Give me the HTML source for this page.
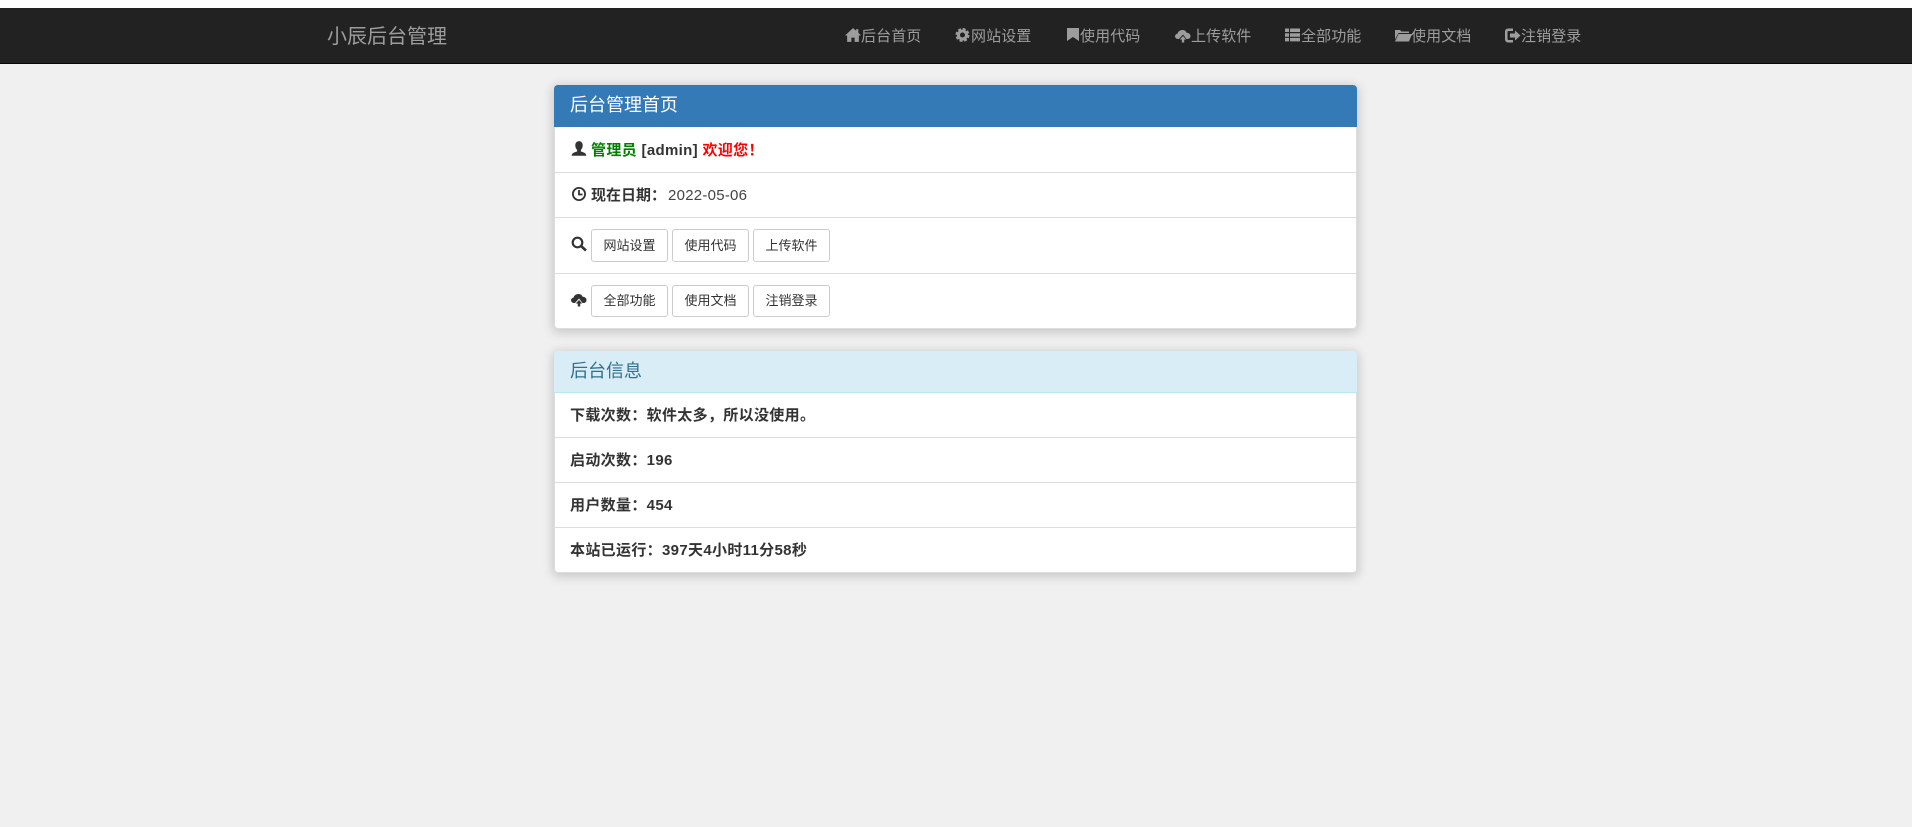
<!DOCTYPE html>
<html lang="zh-CN">
<head>
<meta charset="utf-8">
<title>小辰后台管理</title>
<style>
*{box-sizing:border-box}
html,body{margin:0;padding:0;width:1912px;height:827px;overflow:hidden;background:#f0f0f0;font-family:"Liberation Sans","Noto Sans CJK SC",sans-serif;color:#333}
.abs,.t,svg{position:absolute}
.t{white-space:nowrap;line-height:20px;font-size:15px}
#top{left:0;top:0;width:1912px;height:8px;background:#fff}
#nav{left:0;top:8px;width:1912px;height:56px;background:#222;border-bottom:1px solid #080808}
.n{color:#9d9d9d;top:27px;letter-spacing:.1px}
.brand{color:#9d9d9d;font-size:20px;left:327px;top:27px}
.panel{background:#fff;left:554px;width:803px;border:1px solid #ddd;border-radius:4px;box-shadow:0 2px 10px 2px rgba(0,0,0,.16)}
.h{left:554px;width:803px;height:42px;border-radius:4px 4px 0 0}
.line{left:555px;width:801px;height:1px;background:#ddd}
.ht{font-size:18px;left:570px}
.b{font-weight:bold;color:#333;letter-spacing:.33px}
.btn{height:33px;width:77px;border:1px solid #ccc;border-radius:3px;background:#fff;font-size:13px;line-height:31px;text-align:center;color:#333}
</style>
</head>
<body>
<div class="abs" id="top"></div>
<div class="abs" id="nav"></div>
<div class="t brand">小辰后台管理</div>

<svg style="left:845px;top:27px" width="16" height="16" viewBox="0 0 15 15" fill="#9d9d9d"><path d="M7.5 1 0 8h2v6h4V10h3v4h4V8h2L12.5 5.4V2h-2v1.5z"/></svg>
<div class="t n" style="left:861px">后台首页</div>
<svg style="left:955px;top:28px" width="15" height="15" viewBox="0 0 15 15"><circle cx="7.5" cy="7" r="4" fill="none" stroke="#9d9d9d" stroke-width="3"/><circle cx="7.5" cy="7" r="6" fill="none" stroke="#9d9d9d" stroke-width="2" stroke-dasharray="3 1.71"/></svg>
<div class="t n" style="left:971px">网站设置</div>
<svg style="left:1066px;top:27px" width="14" height="15" viewBox="0 0 14 15" fill="#9d9d9d"><path d="M1 1h12v13L7 10 1 14z"/></svg>
<div class="t n" style="left:1080px">使用代码</div>
<svg style="left:1175px;top:28px" width="16" height="15" viewBox="0 0 16 15" fill="#9d9d9d"><path d="M4 11H3C1 11 0 9.5 0 8.3 0 7 1 6 2.4 5.8 3 3.500 5 2 7.500 2c2 0 3.600 1.200 4.200 2.800C14 4.800 15.500 6.300 15.500 8s-1 3-3 3h-1L8 6.500z"/><path d="M8 8 4.800 11.500H6.800V14.500H9.200V11.500H11.200z"/></svg>
<div class="t n" style="left:1191px">上传软件</div>
<svg style="left:1285px;top:28px" width="15" height="14" viewBox="0 0 15 13" fill="#9d9d9d"><path d="M0 0h4v3.500H0zM5 0h10v3.500H5zM0 4.700h4v3.500H0zM5 4.700h10v3.500H5zM0 9.400h4v3.500H0zM5 9.400h10v3.500H5z"/></svg>
<div class="t n" style="left:1301px">全部功能</div>
<svg style="left:1395px;top:28px" width="17" height="14" viewBox="0 0 17 13" fill="#9d9d9d"><path d="M0 11V1.500h5L6.500 3H14v1.500H3.500z"/><path d="M3.500 5.500H17L14 13H0z"/></svg>
<div class="t n" style="left:1411px">使用文档</div>
<svg style="left:1505px;top:28px" width="16" height="15" viewBox="0 0 16 14" fill="#9d9d9d"><path d="M3 0h5v2.500H3.500a1 1 0 0 0-1 1v7a1 1 0 0 0 1 1H8V14H3a3 3 0 0 1-3-3V3a3 3 0 0 1 3-3z"/><path d="M5 5h5V2l5.500 5L10 12V9H5z"/></svg>
<div class="t n" style="left:1521px">注销登录</div>

<div class="abs panel" style="top:85px;height:244px"></div>
<div class="abs h" style="top:85px;background:#337ab7"></div>
<div class="t ht" style="top:95px;color:#fff">后台管理首页</div>

<svg style="left:570px;top:140px" width="18" height="18" viewBox="0 0 16 16" fill="#333"><path d="M8 1c2 0 3.300 1.600 3.300 3.800 0 1.700-.7 3.200-1.600 4v1.400c2.300.7 4.800 1.300 4.800 3.800H1.500c0-2.500 2.500-3.100 4.800-3.800V8.800c-.9-.8-1.600-2.300-1.600-4C4.700 2.600 6 1 8 1z"/></svg>
<div class="t b" style="left:591px;top:141px"><span style="color:green">管理员</span> [admin] <span style="color:red">欢迎您！</span></div>
<div class="abs line" style="top:172px"></div>

<svg style="left:571px;top:186px" width="16" height="16" viewBox="0 0 16 16" fill="none" stroke="#333" stroke-width="1.800"><circle cx="8" cy="8" r="6.100"/><path d="M8 4v4.500H11.500"/></svg>
<div class="t" style="left:591px;top:186px"><span class="b" style="letter-spacing:0">现在日期：</span><span style="margin-left:2px;letter-spacing:.25px;color:#444">2022-05-06</span></div>
<div class="abs line" style="top:217px"></div>

<svg style="left:571px;top:236px" width="16" height="16" viewBox="0 0 16 16" fill="none" stroke="#333"><circle cx="6.500" cy="6.500" r="4.800" stroke-width="2.200"/><path d="M10 10l5 4.500" stroke-width="2.600"/></svg>
<div class="abs btn" style="left:591px;top:229px">网站设置</div>
<div class="abs btn" style="left:672px;top:229px">使用代码</div>
<div class="abs btn" style="left:753px;top:229px">上传软件</div>
<div class="abs line" style="top:273px"></div>

<svg style="left:571px;top:292px" width="16" height="15" viewBox="0 0 16 15" fill="#333"><path d="M4 11H3C1 11 0 9.500 0 8.300 0 7 1 6 2.400 5.800 3 3.500 5 2 7.500 2c2 0 3.600 1.200 4.200 2.800C14 4.800 15.500 6.300 15.500 8s-1 3-3 3h-1L8 6.500z"/><path d="M8 8 4.800 11.500H6.800V14.500H9.200V11.500H11.200z"/></svg>
<div class="abs btn" style="left:591px;top:285px;height:32px;line-height:30px">全部功能</div>
<div class="abs btn" style="left:672px;top:285px;height:32px;line-height:30px">使用文档</div>
<div class="abs btn" style="left:753px;top:285px;height:32px;line-height:30px">注销登录</div>

<div class="abs panel" style="top:351px;height:222px"></div>
<div class="abs h" style="top:351px;background:#d9edf7;border-bottom:1px solid #bce8f1"></div>
<div class="t ht" style="top:361px;color:#31708f">后台信息</div>
<div class="t b" style="left:570px;top:406px">下载次数：软件太多，所以没使用。</div>
<div class="abs line" style="top:437px"></div>
<div class="t b" style="left:570px;top:451px">启动次数：196</div>
<div class="abs line" style="top:482px"></div>
<div class="t b" style="left:570px;top:496px">用户数量：454</div>
<div class="abs line" style="top:527px"></div>
<div class="t b" style="left:570px;top:541px">本站已运行：397天4小时11分58秒</div>
</body>
</html>
